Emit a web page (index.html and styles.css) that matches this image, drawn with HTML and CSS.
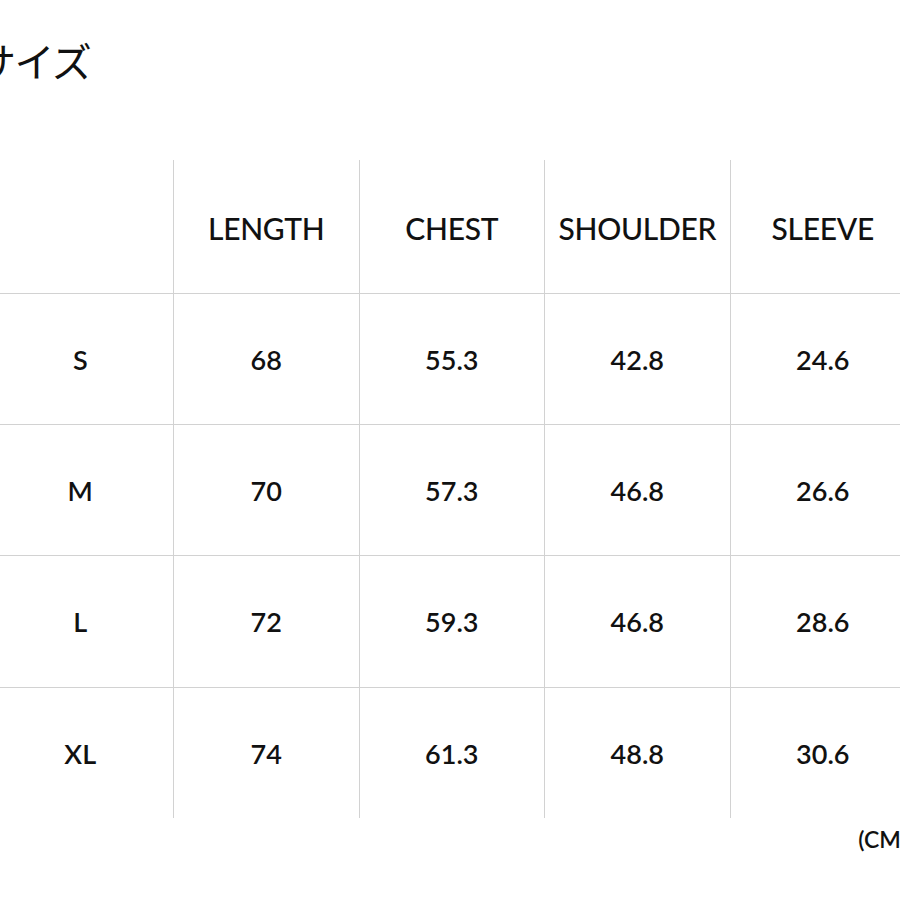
FILE: index.html
```html
<!DOCTYPE html>
<html lang="ja">
<head>
<meta charset="utf-8">
<title>サイズ</title>
<link rel="stylesheet" href="styles.css">
</head>
<body>
<div class="page">
  <h1 class="title">サイズ</h1>
  <div class="chart">
    <div class="cell head"></div>
    <div class="cell head col">LENGTH</div>
    <div class="cell head col">CHEST</div>
    <div class="cell head col">SHOULDER</div>
    <div class="cell head col">SLEEVE</div>

    <div class="cell row size">S</div>
    <div class="cell row col">68</div>
    <div class="cell row col">55.3</div>
    <div class="cell row col">42.8</div>
    <div class="cell row col">24.6</div>

    <div class="cell row size">M</div>
    <div class="cell row col">70</div>
    <div class="cell row col">57.3</div>
    <div class="cell row col">46.8</div>
    <div class="cell row col">26.6</div>

    <div class="cell row size">L</div>
    <div class="cell row col">72</div>
    <div class="cell row col">59.3</div>
    <div class="cell row col">46.8</div>
    <div class="cell row col">28.6</div>

    <div class="cell row size">XL</div>
    <div class="cell row col">74</div>
    <div class="cell row col">61.3</div>
    <div class="cell row col">48.8</div>
    <div class="cell row col">30.6</div>
  </div>
  <div class="unit">(CM)</div>
</div>
</body>
</html>
```

FILE: styles.css
```css
html, body {
  margin: 0;
  padding: 0;
  background: #ffffff;
}
body {
  width: 900px;
  height: 900px;
  overflow: hidden;
  font-family: "Lato", "Liberation Sans", sans-serif;
  color: #111111;
}
.page {
  width: 900px;
  height: 900px;
  overflow: hidden;
}
.title {
  margin: 0 0 0 -24px;
  padding-top: 35px;
  height: 160px;
  box-sizing: border-box;
  font-family: "Noto Sans CJK JP", sans-serif;
  font-weight: 400;
  font-size: 40px;
  line-height: 50px;
  letter-spacing: -1.5px;
  color: #111;
}
.chart {
  display: grid;
  grid-template-columns: repeat(5, 185.5px);
  grid-template-rows: 133px 131px 131px 132px 131px;
  margin-left: -12.5px;
  width: 927.5px;
}
.cell {
  display: flex;
  align-items: center;
  justify-content: center;
  font-size: 29px;
}
.col {
  border-left: 1.5px solid #d2d2d2;
}
.head {
  font-weight: 500;
  font-size: 30px;
  padding-top: 2px;
  letter-spacing: -0.3px;
}
.row {
  border-top: 1.5px solid #d2d2d2;
  font-weight: 600;
  font-size: 27px;
}
.unit {
  text-align: right;
  margin-right: -7px;
  margin-top: 6px;
  font-size: 23px;
  line-height: 30px;
  font-weight: 600;
}
```
